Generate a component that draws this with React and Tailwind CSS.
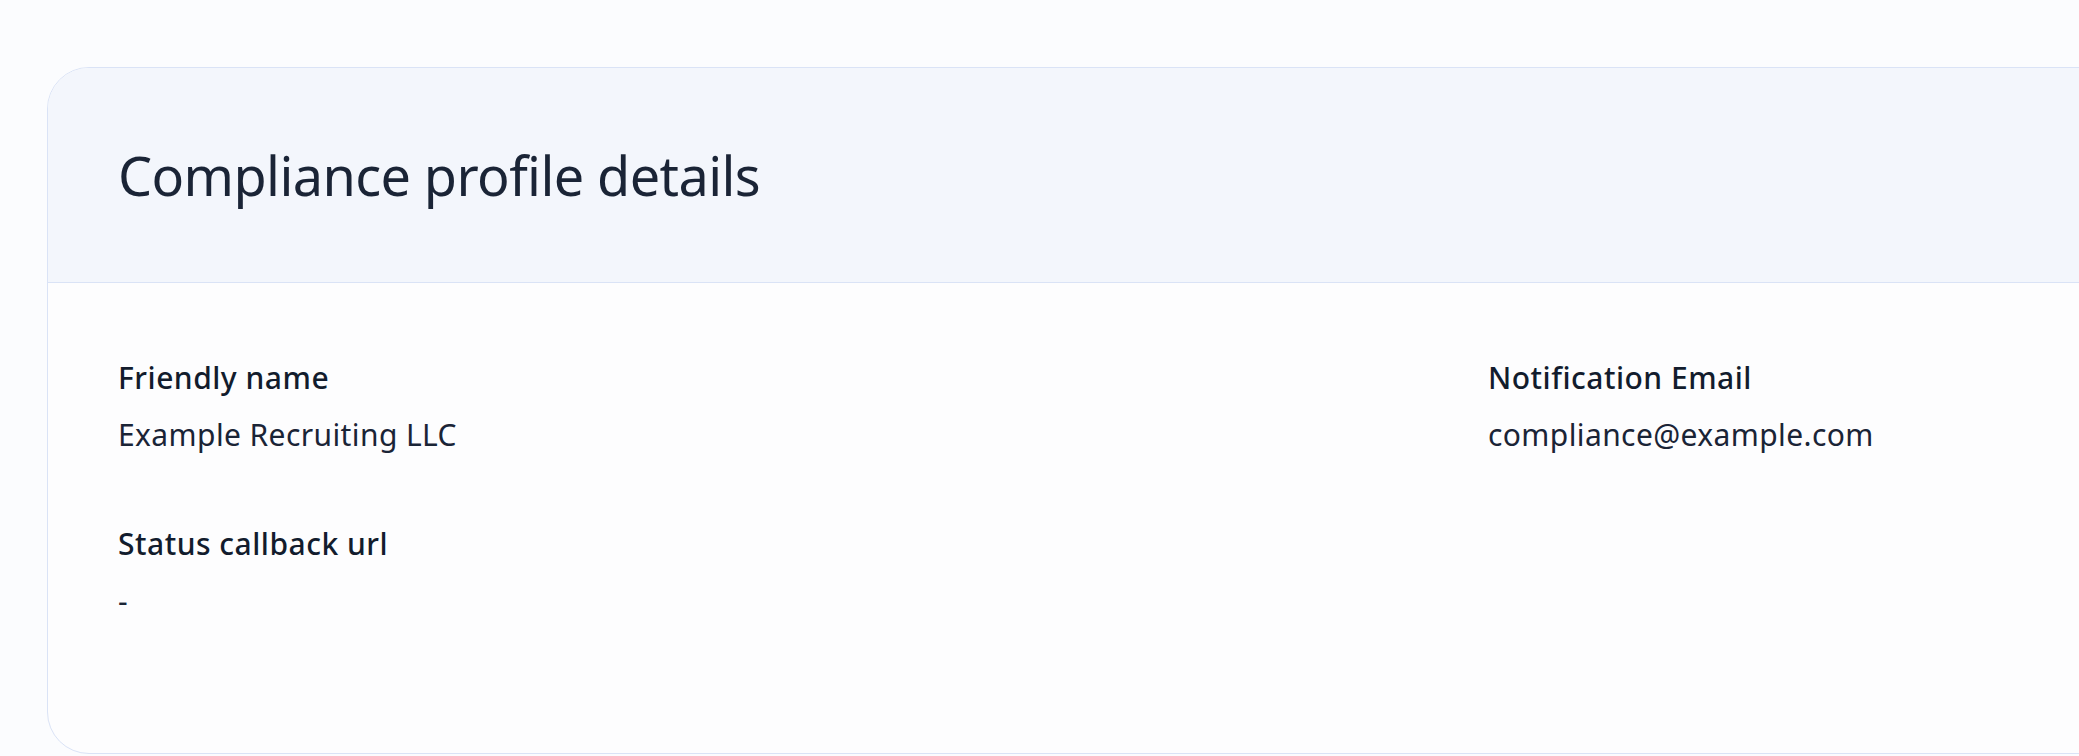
const details = [
  { label: 'Friendly name', value: 'Example Recruiting LLC' },
  { label: 'Notification Email', value: 'compliance@example.com' },
  { label: 'Status callback url', value: '-' },
];

function DetailItem({ label, value }) {
  return (
    <div className="flex flex-col gap-[12px]">
      <dt className="text-[30px] leading-[45px] font-medium tracking-[0.5px] text-[#121c2d]">{label}</dt>
      <dd className="text-[30px] leading-[45px] font-normal tracking-[0.4px] text-[#1a2436]">{value}</dd>
    </div>
  );
}

export default function App() {
  return (
    <div
      className="h-[756px] w-full overflow-hidden bg-[#fbfcfe] pl-[47px] pt-[67px]"
      style={{ fontFamily: '"Noto Sans", "Open Sans", sans-serif' }}
    >
      <section className="w-[2300px] overflow-hidden rounded-[42px] border border-[#dae3f6] bg-[#fdfdfe]">
        {/* Header */}
        <header className="border-b border-[#dae3f6] bg-[#f3f6fc] px-[70px] py-[73px]">
          <h1 className="text-[54px] leading-[68px] font-normal tracking-[-0.6px] text-[#1a2436]">
            Compliance profile details
          </h1>
        </header>

        {/* Detail grid */}
        <dl className="grid grid-cols-[1370px_1fr] gap-y-[64px] px-[70px] pt-[72px] pb-[130px]">
          {details.map((d) => (
            <DetailItem key={d.label} label={d.label} value={d.value} />
          ))}
        </dl>
      </section>
    </div>
  );
}
